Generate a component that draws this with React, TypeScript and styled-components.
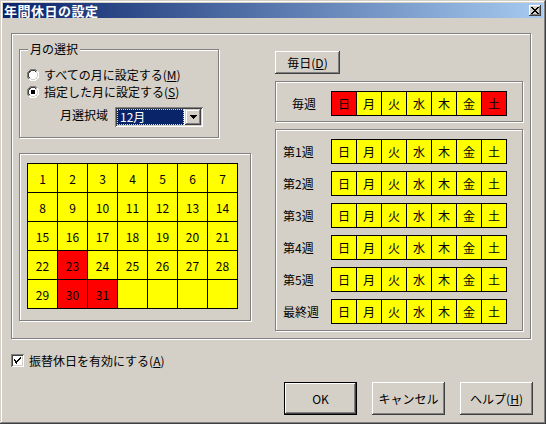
import styled, { createGlobalStyle } from 'styled-components';

const GlobalStyle = createGlobalStyle`
  body {
    margin: 0;
    background: #d4d0c8;
    font-family: "Noto Sans CJK JP", "Liberation Sans", sans-serif;
    font-size: 12px;
    color: #000;
  }
`;

const Window = styled.div`
  width: 546px;
  height: 424px;
  box-sizing: border-box;
  padding: 3px;
  background: #d4d0c8;
  box-shadow: inset -1px -1px #404040, inset 1px 1px #d4d0c8, inset -2px -2px #808080, inset 2px 2px #fff;
  display: flex;
  flex-direction: column;
`;

const TitleBar = styled.div`
  height: 15px;
  display: flex;
  align-items: center;
  justify-content: space-between;
  background: linear-gradient(to right, #0a246a, #a6caf0);
  padding: 0 2px 0 1px;
`;

const TitleText = styled.span`
  color: #fff;
  font-weight: bold;
  font-size: 13px;
  line-height: 15px;
  letter-spacing: 0.5px;
`;

const CloseButton = styled.div`
  width: 12px;
  height: 11px;
  box-sizing: border-box;
  background: #d4d0c8;
  box-shadow: inset -1px -1px #404040, inset 1px 1px #fff, inset -2px -2px #808080;
  display: flex;
  align-items: center;
  justify-content: center;
`;

const Body = styled.div`
  flex: 1;
  display: flex;
  flex-direction: column;
  padding: 15px 10px 0 8px;
`;

const GroupBox = styled.div<{ $w: number; $h: number }>`
  position: relative;
  box-sizing: border-box;
  width: ${(p) => p.$w}px;
  height: ${(p) => p.$h}px;
  border: 1px solid #808080;
  box-shadow: inset 1px 1px #fff, 1px 1px #fff;
  flex-shrink: 0;
`;

const OuterFrame = styled(GroupBox)`
  display: flex;
  align-items: flex-start;
  padding-left: 7px;
  gap: 24px;
`;

const LeftColumn = styled.div`
  width: 232px;
  margin-top: 15px;
  display: flex;
  flex-direction: column;
  gap: 15px;
`;

const RightColumn = styled.div`
  width: 248px;
  margin-top: 17px;
  display: flex;
  flex-direction: column;
  gap: 7px;
`;

const GroupLabel = styled.span`
  position: absolute;
  top: -9px;
  left: 8px;
  padding: 0 2px;
  background: #d4d0c8;
  line-height: 16px;
`;

const MonthGroup = styled(GroupBox)`
  padding: 16px 0 0 7px;
`;

const RadioRow = styled.div`
  height: 17px;
  display: flex;
  align-items: center;
  gap: 5px;
`;

const RangeRow = styled.div`
  display: flex;
  align-items: flex-start;
  margin-top: 7px;
  padding-left: 33px;
`;

const RangeLabel = styled.span`
  width: 55px;
  line-height: 16px;
`;

const Combo = styled.div`
  width: 88px;
  height: 20px;
  box-sizing: border-box;
  padding: 2px;
  background: #fff;
  box-shadow: inset 1px 1px #808080, inset -1px -1px #fff, inset 2px 2px #404040, inset -2px -2px #d4d0c8;
  display: flex;
`;

const ComboValue = styled.div`
  flex: 1;
  margin-right: 1px;
  box-sizing: border-box;
  background: #0a246a;
  border: 1px dotted #e8d890;
  color: #fff;
  line-height: 14px;
  padding-left: 2px;
`;

const ComboArrow = styled.div`
  width: 16px;
  height: 16px;
  box-sizing: border-box;
  background: #d4d0c8;
  box-shadow: inset -1px -1px #404040, inset 1px 1px #d4d0c8, inset -2px -2px #808080, inset 2px 2px #fff;
  display: flex;
  align-items: center;
  justify-content: center;
`;

const CalendarGroup = styled(GroupBox)`
  padding: 9px 0 0 7px;
`;

const CalendarGrid = styled.div`
  display: grid;
  grid-template-columns: repeat(7, 30px);
  grid-auto-rows: 29px;
  width: max-content;
  border-left: 1px solid #000;
  border-top: 1px solid #000;
`;

const DateCell = styled.div<{ $off?: boolean }>`
  border-right: 1px solid #000;
  border-bottom: 1px solid #000;
  background: ${(p) => (p.$off ? '#ff0000' : '#ffff00')};
  display: flex;
  align-items: center;
  justify-content: center;
  font-size: 12px;
`;

const Push = styled.button<{ $w: number; $h: number; $default?: boolean }>`
  width: ${(p) => p.$w}px;
  height: ${(p) => p.$h}px;
  box-sizing: border-box;
  padding: 0;
  font: inherit;
  color: #000;
  background: #d4d0c8;
  border: ${(p) => (p.$default ? '1px solid #000' : 'none')};
  box-shadow: inset -1px -1px #404040, inset 1px 1px #fff, inset -2px -2px #808080, inset 2px 2px #d4d0c8;
  display: flex;
  align-items: center;
  justify-content: center;
`;

const WeeklyGroup = styled(GroupBox)`
  display: flex;
  align-items: flex-start;
  padding: 9px 0 0 16px;
`;

const WeekLabel = styled.span<{ $w: number }>`
  width: ${(p) => p.$w}px;
  line-height: 25px;
`;

const WeeksGroup = styled(GroupBox)`
  display: flex;
  flex-direction: column;
  gap: 7px;
  padding: 9px 0 0 7px;
`;

const WeekRow = styled.div`
  display: flex;
  align-items: center;
`;

const DayStrip = styled.div`
  display: flex;
  border: 1px solid #000;
`;

const DayCell = styled.div<{ $off?: boolean }>`
  width: 24px;
  height: 23px;
  border-right: 1px solid #000;
  background: ${(p) => (p.$off ? '#ff0000' : '#ffff00')};
  display: flex;
  align-items: center;
  justify-content: center;
  &:last-child {
    border-right: none;
  }
`;

const CheckRow = styled.div`
  display: flex;
  align-items: center;
  gap: 5px;
  margin-top: 15px;
  height: 13px;
`;

const CheckBox = styled.div`
  width: 13px;
  height: 13px;
  box-sizing: border-box;
  background: #fff;
  box-shadow: inset 1px 1px #808080, inset -1px -1px #fff, inset 2px 2px #404040, inset -2px -2px #d4d0c8;
  display: flex;
  align-items: center;
  justify-content: center;
`;

const Footer = styled.div`
  display: flex;
  justify-content: flex-end;
  gap: 15px;
  margin-top: 15px;
`;

const Key = styled.u`
  text-underline-offset: 1px;
`;

function Radio({ checked }: { checked?: boolean }) {
  return (
    <svg width="12" height="12" viewBox="0 0 12 12" shapeRendering="crispEdges">
      <circle cx="6" cy="6" r="5.5" fill="#fff" />
      <path d="M10 2 A5.5 5.5 0 0 0 2 10" stroke="#808080" strokeWidth="1" fill="none" />
      <path d="M9.2 2.8 A4.5 4.5 0 0 0 2.8 9.2" stroke="#404040" strokeWidth="1" fill="none" />
      <path d="M2 10 A5.5 5.5 0 0 0 10 2" stroke="#fff" strokeWidth="1" fill="none" />
      <path d="M2.8 9.2 A4.5 4.5 0 0 0 9.2 2.8" stroke="#d4d0c8" strokeWidth="1" fill="none" />
      {checked && <rect x="4" y="4" width="4" height="4" fill="#000" />}
    </svg>
  );
}

const days = ['日', '月', '火', '水', '木', '金', '土'];
const weeks = ['第1週', '第2週', '第3週', '第4週', '第5週', '最終週'];
const holidays = [23, 30, 31];

export default function App() {
  const cells = Array.from({ length: 35 }, (_, i) => (i < 31 ? i + 1 : null));
  return (
    <>
      <GlobalStyle />
      <Window>
        <TitleBar>
          <TitleText>年間休日の設定</TitleText>
          <CloseButton>
            <svg width="8" height="7" viewBox="0 0 8 7" shapeRendering="crispEdges">
              <path d="M0 0h2v1h-2zM6 0h2v1h-2zM1 1h2v1h-2zM5 1h2v1h-2zM2 2h4v1h-4zM3 3h2v1h-2zM2 4h4v1h-4zM1 5h2v1h-2zM5 5h2v1h-2zM0 6h2v1h-2zM6 6h2v1h-2z" fill="#000" />
            </svg>
          </CloseButton>
        </TitleBar>
        <Body>
          <OuterFrame $w={520} $h={306}>
            <LeftColumn>
              <MonthGroup $w={200} $h={89}>
                <GroupLabel>月の選択</GroupLabel>
                <RadioRow>
                  <Radio />
                  <span>
                    すべての月に設定する(<Key>M</Key>)
                  </span>
                </RadioRow>
                <RadioRow>
                  <Radio checked />
                  <span>
                    指定した月に設定する(<Key>S</Key>)
                  </span>
                </RadioRow>
                <RangeRow>
                  <RangeLabel>月選択域</RangeLabel>
                  <Combo>
                    <ComboValue>12月</ComboValue>
                    <ComboArrow>
                      <svg width="7" height="4" viewBox="0 0 7 4" shapeRendering="crispEdges">
                        <path d="M0 0h7v1h-7zM1 1h5v1h-5zM2 2h3v1h-3zM3 3h1v1h-1z" fill="#000" />
                      </svg>
                    </ComboArrow>
                  </Combo>
                </RangeRow>
              </MonthGroup>
              <CalendarGroup $w={232} $h={168}>
                <CalendarGrid>
                  {cells.map((d, i) => (
                    <DateCell key={i} $off={d !== null && holidays.includes(d)}>
                      {d}
                    </DateCell>
                  ))}
                </CalendarGrid>
              </CalendarGroup>
            </LeftColumn>
            <RightColumn>
              <Push $w={65} $h={23}>
                毎日(<Key>D</Key>)
              </Push>
              <WeeklyGroup $w={248} $h={41}>
                <WeekLabel $w={39}>毎週</WeekLabel>
                <DayStrip>
                  {days.map((d, i) => (
                    <DayCell key={d} $off={i === 0 || i === 6}>
                      {d}
                    </DayCell>
                  ))}
                </DayStrip>
              </WeeklyGroup>
              <WeeksGroup $w={248} $h={202}>
                {weeks.map((w) => (
                  <WeekRow key={w}>
                    <WeekLabel $w={48}>{w}</WeekLabel>
                    <DayStrip>
                      {days.map((d) => (
                        <DayCell key={d}>{d}</DayCell>
                      ))}
                    </DayStrip>
                  </WeekRow>
                ))}
              </WeeksGroup>
            </RightColumn>
          </OuterFrame>
          <CheckRow>
            <CheckBox>
              <svg width="7" height="7" viewBox="0 0 7 7" shapeRendering="crispEdges">
                <path d="M6 0h1v1h-1zM5 1h2v1h-2zM0 2h1v1h-1zM4 2h2v1h-2zM0 3h2v1h-2zM3 3h2v1h-2zM1 4h3v1h-3zM1 5h2v1h-2zM2 6h1v1h-1z" fill="#000" />
              </svg>
            </CheckBox>
            <span>
              振替休日を有効にする(<Key>A</Key>)
            </span>
          </CheckRow>
          <Footer>
            <Push $w={73} $h={33} $default>
              OK
            </Push>
            <Push $w={73} $h={33}>
              キャンセル
            </Push>
            <Push $w={73} $h={33}>
              ヘルプ(<Key>H</Key>)
            </Push>
          </Footer>
        </Body>
      </Window>
    </>
  );
}
